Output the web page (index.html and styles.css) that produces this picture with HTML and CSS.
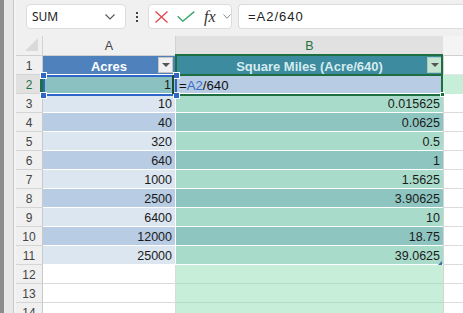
FILE: index.html
```html
<!DOCTYPE html>
<html>
<head>
<meta charset="utf-8">
<link rel="stylesheet" href="styles.css">
</head>
<body>
<div class="app">
  <div class="edge"></div>
  <div class="main">
    <div class="toolbar">
      <div class="namebox">
        <span class="nb-text">SUM</span>
        <svg class="chev" width="10" height="6" viewBox="0 0 10 6"><polyline points="0.5,0.5 5,5 9.5,0.5" fill="none" stroke="#555" stroke-width="1.1"/></svg>
      </div>
      <div class="dots"><i></i><i></i><i></i></div>
      <div class="fbtns">
        <svg class="ico-x" width="13" height="12" viewBox="0 0 13 12"><path d="M0.5 0.5 L12.5 11.5 M12.5 0.5 L0.5 11.5" stroke="#e2474d" stroke-width="1.3" fill="none"/></svg>
        <svg class="ico-ok" width="18" height="11" viewBox="0 0 18 11"><polyline points="0.7,5.3 5.8,10.2 17.3,0.6" fill="none" stroke="#3aa669" stroke-width="1.4"/></svg>
        <span class="fx">fx</span>
        <svg class="chev2" width="8" height="5" viewBox="0 0 8 5"><polyline points="0.5,0.5 4,4.3 7.5,0.5" fill="none" stroke="#8a8a8a" stroke-width="1"/></svg>
      </div>
      <div class="formula">=A2/640</div>
    </div>
    <div class="sheet">
      <div class="corner"><svg width="14" height="14" viewBox="0 0 14 14"><polygon points="13,0 13,13 0,13" fill="#dadada"/></svg></div>
      <div class="ch">A</div>
      <div class="ch sel">B</div>
      <div class="ch rest"></div>

      <div class="rh">1</div>
      <div class="hd a1">Acres<span class="flt"><svg width="8" height="4" viewBox="0 0 8 4"><polygon points="0,0 8,0 4,4" fill="#555"/></svg></span></div>
      <div class="hd b1">Square Miles (Acre/640)<span class="flt g"><svg width="8" height="4" viewBox="0 0 8 4"><polygon points="0,0 8,0 4,4" fill="#555"/></svg></span></div>
      <div class="x top"></div>

      <div class="rh sel">2</div>
      <div class="c a2">1</div>
      <div class="c b2"><span>=</span><span class="ref">A2</span><span>/640</span></div>
      <div class="m2"></div>

      <div class="rh">3</div><div class="c al">10</div><div class="c bl">0.015625</div><div class="x"></div>
      <div class="rh">4</div><div class="c ad">40</div><div class="c bd">0.0625</div><div class="x"></div>
      <div class="rh">5</div><div class="c al">320</div><div class="c bl">0.5</div><div class="x"></div>
      <div class="rh">6</div><div class="c ad">640</div><div class="c bd">1</div><div class="x"></div>
      <div class="rh">7</div><div class="c al">1000</div><div class="c bl">1.5625</div><div class="x"></div>
      <div class="rh">8</div><div class="c ad">2500</div><div class="c bd">3.90625</div><div class="x"></div>
      <div class="rh">9</div><div class="c al">6400</div><div class="c bl">10</div><div class="x"></div>
      <div class="rh">10</div><div class="c ad">12000</div><div class="c bd">18.75</div><div class="x"></div>
      <div class="rh">11</div><div class="c al">25000</div><div class="c bl">39.0625</div><div class="x"></div>
      <div class="rh">12</div><div class="c e"></div><div class="c m"></div><div class="x"></div>
      <div class="rh">13</div><div class="c e"></div><div class="c m"></div><div class="x"></div>
      <div class="rh">14</div><div class="c e"></div><div class="c m"></div><div class="x"></div>

      <div class="box-b1"></div>
      <div class="box-b2"></div>
      <div class="ref-box">
        <i class="k tl"></i><i class="k tr"></i><i class="k bl"></i><i class="k br"></i>
      </div>
      <div class="bar"></div>
      <div class="handle"></div>
      <div class="resize"></div>
    </div>
  </div>
</div>
</body>
</html>
```

FILE: styles.css
```css
html, body {
  margin: 0;
  padding: 0;
  width: 463px;
  height: 313px;
  overflow: hidden;
  background: #f0f0f0;
  font-family: "Liberation Sans", Arial, sans-serif;
}

.app {
  display: flex;
  width: 463px;
  height: 313px;
}

.edge {
  width: 16px;
  flex: none;
  background: linear-gradient(to right, #8c8c8c 0 4px, #e7e7e7 4px 13px, #c7c7c7 13px 14px, #f4f4f4 14px 16px);
}

.main {
  flex: 1;
  display: flex;
  flex-direction: column;
  min-width: 0;
}

/* toolbar */
.toolbar {
  height: 36px;
  flex: none;
  display: flex;
  align-items: flex-start;
  padding: 4px 0 0 10px;
  box-sizing: border-box;
  background: #f0f0f0;
  overflow: hidden;
}

.namebox {
  width: 100px;
  height: 25px;
  box-sizing: border-box;
  background: #fff;
  border: 1px solid #dcdcdc;
  border-radius: 4px;
  display: flex;
  align-items: center;
  justify-content: space-between;
  padding: 0 10px 0 5px;
  flex: none;
}

.nb-text {
  font-family: "Noto Sans", sans-serif;
  font-size: 12px;
  color: #222;
}

.dots {
  width: 2px;
  margin: 8px 10px 0 10px;
  display: flex;
  flex-direction: column;
  gap: 2px;
  flex: none;
}

.dots i {
  display: block;
  width: 2px;
  height: 2px;
  background: #444;
}

.fbtns {
  width: 84px;
  height: 25px;
  box-sizing: border-box;
  background: #fff;
  border: 1px solid #dcdcdc;
  border-radius: 4px;
  display: flex;
  align-items: center;
  padding-left: 6px;
  flex: none;
}

.ico-x { margin-top: 1px; }
.ico-ok { margin-left: 9px; }

.fx {
  font-family: "Liberation Serif", serif;
  font-style: italic;
  font-size: 16px;
  color: #333;
  margin-left: 9px;
  line-height: 1;
}

.chev2 { margin-left: 7px; }

.formula {
  flex: none;
  width: 240px;
  height: 25px;
  margin-left: 6px;
  box-sizing: border-box;
  background: #fff;
  border: 1px solid #dcdcdc;
  border-right: none;
  border-radius: 4px 0 0 4px;
  padding-left: 9px;
  font-size: 13px;
  letter-spacing: 1px;
  line-height: 23px;
  color: #222;
}

/* sheet */
.sheet {
  position: relative;
  flex: 1;
  display: grid;
  grid-template-columns: 27px 133px 267px 20px;
  grid-template-rows: 20px;
  grid-auto-rows: 19px;
  background: #fff;
  overflow: hidden;
}

.sheet > div {
  box-sizing: border-box;
}

.corner {
  background: #f0f0f0;
  border-right: 1px solid #d2d2d2;
  border-bottom: 1px solid #cfcfcf;
  display: flex;
  align-items: flex-end;
  justify-content: flex-end;
  padding: 0 3px 3px 0;
}

.corner svg { display: block; }

.ch {
  background: #f0f0f0;
  border-right: 1px solid #d2d2d2;
  border-bottom: 1px solid #cfcfcf;
  text-align: center;
  font-size: 12.5px;
  line-height: 20px;
  color: #444;
}

.ch.sel {
  background: #e1e1e1;
  color: #1e7145;
  border-bottom: 2px solid #1e7145;
  border-right: none;
}

.ch.rest {
  background: #f4f4f4;
  border-right: none;
}

.rh {
  background: #f0f0f0;
  border-right: 1px solid #c9c9c9;
  border-bottom: 1px solid #d5d5d5;
  text-align: center;
  font-size: 12px;
  color: #444;
  padding-top: 2px;
  line-height: 16px;
}

.rh.sel {
  background: #e1e1e1;
  color: #1e7145;
  border-right: 3px solid #1e7145;
  padding-left: 2px;
}

.hd {
  position: relative;
  text-align: center;
  font-weight: bold;
  font-size: 13px;
  line-height: 19px;
  padding-top: 1px;
  border-bottom: 1px solid #fff;
}

.a1 {
  background: #4f81bd;
  color: #fff;
  border-right: 1px solid #fff;
}

.b1 {
  background: #3c8b9e;
  color: #d4ecef;
}

.flt {
  position: absolute;
  top: 1px;
  right: 2px;
  width: 15px;
  height: 16px;
  box-sizing: border-box;
  background: #f0f0f0;
  border: 1px solid #c4c4c4;
  display: flex;
  align-items: center;
  justify-content: center;
}

.flt.g {
  right: 1px;
  background: #c5e5d2;
  border-color: #a8cdb9;
}

.c {
  font-size: 12.5px;
  color: #1b1b1b;
  text-align: right;
  padding: 3px 3px 0 0;
  line-height: 15px;
  border-bottom: 1px solid #fff;
  white-space: nowrap;
}

.al, .ad, .a2, .e { border-right: 1px solid #fff; }
.al { background: #dce6f1; }
.ad { background: #b8cce4; }
.a2 { background: #8cc1c1; padding-right: 4px; }
.bl { background: #a8dbca; }
.bd { background: #8ec5c1; }

.b2 {
  background: #b8cce4;
  text-align: left;
  padding-left: 3px;
  font-size: 13.2px;
  color: #111;
}

.b2 .ref { color: #3a6cc6; }

.e {
  background: #fff;
  border-bottom: 1px solid #dadada;
  border-right: 1px solid #dadada;
}

.m {
  background: #c6eed9;
  border-bottom: 1px solid #b3dcc6;
}

.m2 {
  background: #c6eed9;
}

.x {
  background: #fff;
  border-left: 1px solid #d4d4d4;
  border-bottom: 1px solid #dcdcdc;
}

.x.top {
  border-bottom: 1px solid #e6e6e6;
}

/* overlays */
.box-b1 {
  position: absolute;
  left: 159px;
  top: 18px;
  width: 268px;
  height: 21px;
  border: 2px solid #1e6e42;
  border-bottom: none;
  box-sizing: border-box;
}

.box-b2 {
  position: absolute;
  left: 159px;
  top: 38px;
  width: 268px;
  height: 22px;
  border: 2px solid #1e6e42;
  box-sizing: border-box;
}

.ref-box {
  position: absolute;
  left: 27px;
  top: 39px;
  width: 134px;
  height: 21px;
  border: 2px solid #2f67c9;
  box-sizing: border-box;
}

.k {
  position: absolute;
  width: 5px;
  height: 5px;
  background: #2f67c9;
  border: 1px solid #fff;
}

.k.tl { left: -5px; top: -5px; }
.k.tr { right: -5px; top: -5px; }
.k.bl { left: -5px; bottom: -5px; }
.k.br { right: -5px; bottom: -5px; }

.bar {
  position: absolute;
  left: 156px;
  top: 39px;
  width: 2px;
  height: 19px;
  background: #1f4a36;
}

.handle {
  position: absolute;
  left: 424px;
  top: 56px;
  width: 5px;
  height: 5px;
  background: #1e6e42;
  border: 1px solid #fff;
}

.resize {
  position: absolute;
  left: 422px;
  top: 225px;
  width: 0;
  height: 0;
  border-left: 4px solid transparent;
  border-bottom: 4px solid #3f6ea6;
}
```
